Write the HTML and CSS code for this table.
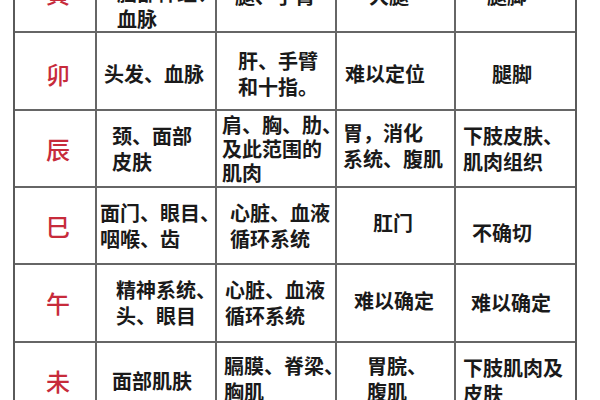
FILE: index.html
```html
<!DOCTYPE html>
<html lang="zh">
<head>
<meta charset="utf-8">
<link rel="stylesheet" href="styles.css">
</head>
<body>
<div class="table">
  <div class="cell zhi">寅</div>
  <div class="cell x20 first2">脑部神经、<br>血脉</div>
  <div class="cell x18 first">腿、手臂</div>
  <div class="cell x32 first">大腿</div>
  <div class="cell x31 first">腿脚</div>

  <div class="cell zhi dn">卯</div>
  <div class="cell x7 dn">头发、血脉</div>
  <div class="cell x21 dn">肝、手臂<br>和十指。</div>
  <div class="cell x8 dn">难以定位</div>
  <div class="cell x36 dn">腿脚</div>

  <div class="cell zhi">辰</div>
  <div class="cell x15">颈、面部<br>皮肤</div>
  <div class="cell x5 tight">肩、胸、肋、<br>及此范围的<br>肌肉</div>
  <div class="cell x6 up">胃，消化<br>系统、腹肌</div>
  <div class="cell x7">下肢皮肤、<br>肌肉组织</div>

  <div class="cell zhi">巳</div>
  <div class="cell x3">面门、眼目、<br>咽喉、齿</div>
  <div class="cell x13">心脏、血液<br>循环系统</div>
  <div class="cell x36 up">肛门</div>
  <div class="cell x16 dn2">不确切</div>

  <div class="cell zhi">午</div>
  <div class="cell x19">精神系统、<br>头、眼目</div>
  <div class="cell x8">心脏、血液<br>循环系统</div>
  <div class="cell x17 up">难以确定</div>
  <div class="cell x15">难以确定</div>

  <div class="cell zhi">未</div>
  <div class="cell x15">面部肌肤</div>
  <div class="cell x7 up">膈膜、脊梁、<br>胸肌</div>
  <div class="cell x30 up">胃脘、<br>腹肌</div>
  <div class="cell x7">下肢肌肉及<br>皮肤</div>
</div>
</body>
</html>
```

FILE: styles.css
```css
html, body {
  margin: 0;
  padding: 0;
  background: #ffffff;
  width: 600px;
  height: 400px;
  overflow: hidden;
}

.table {
  display: grid;
  grid-template-columns: 80px 118px 118px 117px 119px;
  grid-template-rows: 76px 76px 75px 75px 76px 76px;
  gap: 2px;
  background: #666666;
  border: 2px solid #5a5a5a;
  width: max-content;
  margin: -47px 0 0 13px;
}

.cell {
  background: #ffffff;
  display: flex;
  align-items: center;
  justify-content: flex-start;
  color: #1a1a1a;
  font-family: "Noto Sans CJK SC", "Noto Sans", sans-serif;
  font-size: 20px;
  font-weight: 700;
  line-height: 26px;
  white-space: nowrap;
  overflow: hidden;
}

.zhi {
  color: #c72b3b;
  font-size: 24px;
  font-weight: 500;
  padding-left: 31px;
}

.first { padding-top: 6px; }
.first2 { padding-top: 25px; }
.tight { line-height: 24px; }
.dn { padding-top: 5px; }
.dn2 { padding-top: 14px; }
.up { padding-bottom: 5px; }

.x3 { padding-left: 3px; }
.x5 { padding-left: 5px; }
.x6 { padding-left: 6px; }
.x7 { padding-left: 7px; }
.x8 { padding-left: 8px; }
.x13 { padding-left: 13px; }
.x15 { padding-left: 15px; }
.x16 { padding-left: 16px; }
.x17 { padding-left: 17px; }
.x18 { padding-left: 18px; }
.x19 { padding-left: 19px; }
.x20 { padding-left: 20px; }
.x21 { padding-left: 21px; }
.x30 { padding-left: 30px; }
.x31 { padding-left: 31px; }
.x32 { padding-left: 32px; }
.x36 { padding-left: 36px; }
```
